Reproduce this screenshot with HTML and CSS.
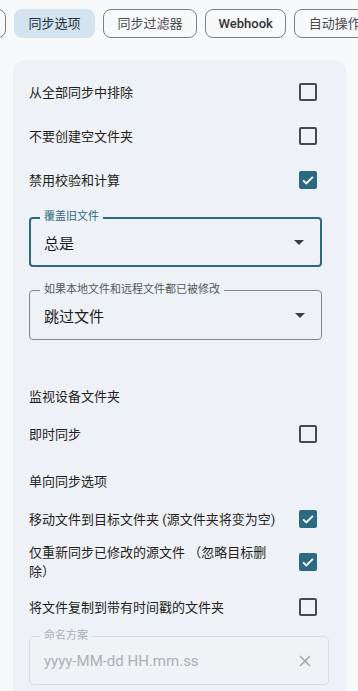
FILE: index.html
```html
<!DOCTYPE html>
<html lang="zh">
<head>
  <meta charset="UTF-8" />
  <title>同步选项</title>
  <link rel="stylesheet" href="styles.css">
</head>
<body>

  <nav class="tabs">
    <div class="chip chip-cut"></div>
    <div class="chip chip-active">同步选项</div>
    <div class="chip">同步过滤器</div>
    <div class="chip chip-latin">Webhook</div>
    <div class="chip">自动操作</div>
  </nav>

  <main class="card">
    <div class="row row-first">
      <span class="row-text">从全部同步中排除</span>
      <span class="check"></span>
    </div>
    <div class="row">
      <span class="row-text">不要创建空文件夹</span>
      <span class="check"></span>
    </div>
    <div class="row">
      <span class="row-text">禁用校验和计算</span>
      <span class="check checked">
        <svg viewBox="0 0 18 18" width="18" height="18"><path d="M4.2 9.3l3.1 3.1 6.6-6.6" fill="none" stroke="#fff" stroke-width="1.8"/></svg>
      </span>
    </div>

    <div class="select select-focused">
      <span class="select-label">覆盖旧文件</span>
      <span class="select-value">总是</span>
      <span class="arrow"></span>
    </div>

    <div class="select select-second">
      <span class="select-label">如果本地文件和远程文件都已被修改</span>
      <span class="select-value">跳过文件</span>
      <span class="arrow"></span>
    </div>

    <div class="section section-first">监视设备文件夹</div>
    <div class="row row-compact">
      <span class="row-text">即时同步</span>
      <span class="check"></span>
    </div>

    <div class="section">单向同步选项</div>
    <div class="row row-compact">
      <span class="row-text">移动文件到目标文件夹 (源文件夹将变为空)</span>
      <span class="check checked">
        <svg viewBox="0 0 18 18" width="18" height="18"><path d="M4.2 9.3l3.1 3.1 6.6-6.6" fill="none" stroke="#fff" stroke-width="1.8"/></svg>
      </span>
    </div>
    <div class="row row-two">
      <span class="row-text">仅重新同步已修改的源文件 （忽略目标删除）</span>
      <span class="check checked">
        <svg viewBox="0 0 18 18" width="18" height="18"><path d="M4.2 9.3l3.1 3.1 6.6-6.6" fill="none" stroke="#fff" stroke-width="1.8"/></svg>
      </span>
    </div>
    <div class="row">
      <span class="row-text">将文件复制到带有时间戳的文件夹</span>
      <span class="check"></span>
    </div>

    <div class="field-disabled">
      <span class="select-label">命名方案</span>
      <span class="field-value">yyyy-MM-dd HH.mm.ss</span>
      <svg class="clear" viewBox="0 0 14 14" width="14" height="14"><path d="M2 2l10 10M12 2L2 12" fill="none" stroke="#a4a7ab" stroke-width="1.6"/></svg>
    </div>
  </main>

</body>
</html>
```

FILE: styles.css
```css
* {
  box-sizing: border-box;
  margin: 0;
  padding: 0;
}

html, body {
  height: 100%;
  overflow: hidden;
  font-family: Roboto, "Noto Sans CJK SC", sans-serif;
  background: #f8f9fb;
  color: #1f1f21;
}

.tabs {
  display: flex;
  gap: 8px;
  padding-top: 9px;
  white-space: nowrap;
}

.chip {
  flex: none;
  height: 29px;
  line-height: 27px;
  padding: 0 13.5px;
  border: 1px solid #7d7f82;
  border-radius: 8px;
  font-size: 13px;
  color: #494c50;
}

.chip-cut {
  width: 50px;
  margin-left: -44px;
}

.chip-active {
  background: #d3e3ef;
  border-color: #d3e3ef;
  color: #23313b;
}

.chip-latin {
  padding: 0 12.5px;
  font-weight: 500;
  color: #303236;
}

.card {
  margin: 22px 12px 0 13px;
  min-height: 700px;
  padding: 10px 16px 0;
  background: #eef1f5;
  border-radius: 12px 12px 0 0;
}

.row {
  display: flex;
  align-items: center;
  justify-content: space-between;
  gap: 22px;
  min-height: 44px;
  padding-right: 13px;
  font-size: 13px;
  line-height: 19px;
}

.row-compact {
  min-height: 40px;
}

.row-two {
  min-height: 46px;
  padding-top: 4px;
  padding-bottom: 4px;
}

.row-text {
  flex: 1;
}

.check {
  flex: none;
  width: 18px;
  height: 18px;
  border: 2px solid #46494d;
  border-radius: 2px;
}

.check.checked {
  border: none;
  background: #2b6a80;
}

.check svg {
  display: block;
}

.select {
  position: relative;
  display: flex;
  align-items: center;
  height: 50px;
  margin: 15px 8px 0 0;
  padding: 0 16px 0 14px;
  border: 1px solid #85888c;
  border-radius: 4px;
}

.select-focused {
  border: 2px solid #2b6a80;
  padding-left: 13px;
}

.select-second {
  margin-top: 23px;
}

.select-label {
  position: absolute;
  top: -8px;
  left: 10px;
  padding: 0 4px;
  background: #eef1f5;
  font-size: 11px;
  line-height: 14px;
  color: #55585c;
}

.select-focused .select-label {
  left: 9px;
  top: -9px;
  color: #2b6a80;
}

.select-value {
  flex: 1;
  font-size: 15px;
  color: #1c1c1e;
}

.arrow {
  width: 0;
  height: 0;
  border-left: 5px solid transparent;
  border-right: 5px solid transparent;
  border-top: 5px solid #3b3e42;
}

.section {
  display: flex;
  align-items: center;
  height: 38px;
  margin-top: 7px;
  font-size: 13px;
}

.section-first {
  margin-top: 36px;
}

.field-disabled {
  position: relative;
  display: flex;
  align-items: center;
  height: 49px;
  margin: 7px 1px 0 0;
  padding: 0 16px 0 14px;
  border: 1px solid #dadde1;
  border-radius: 5px;
  background: #f0f2f5;
}

.field-disabled .select-label {
  color: #adb0b4;
  background: linear-gradient(#eef1f5 50%, #f0f2f5 50%);
}

.field-value {
  flex: 1;
  font-size: 15px;
  color: #adb0b4;
}

.clear {
  flex: none;
}
```
